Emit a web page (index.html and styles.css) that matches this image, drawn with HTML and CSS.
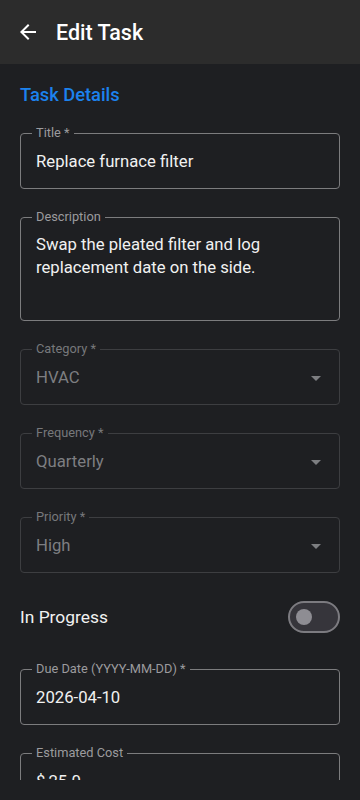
FILE: index.html
```html
<!DOCTYPE html>
<html lang="en">
<head>
<meta charset="utf-8">
<meta name="viewport" content="width=360, initial-scale=1">
<title>Edit Task</title>
<link rel="stylesheet" href="styles.css">
</head>
<body>
<div class="app">
  <header class="appbar">
    <svg class="back" viewBox="0 0 24 24" width="24" height="24"><path d="M20 11H7.83l5.59-5.59L12 4l-8 8 8 8 1.41-1.41L7.83 13H20v-2z" fill="#ffffff"/></svg>
    <h1 class="appbar-title">Edit Task</h1>
  </header>
  <main class="scroll">
    <h2 class="section">Task Details</h2>

    <div class="field">
      <span class="label">Title *</span>
      <div class="value">Replace furnace filter</div>
    </div>

    <div class="field multiline">
      <span class="label">Description</span>
      <div class="value">Swap the pleated filter and log replacement date on the side.</div>
    </div>

    <div class="field disabled">
      <span class="label">Category *</span>
      <div class="value">HVAC</div>
      <span class="caret"></span>
    </div>

    <div class="field disabled">
      <span class="label">Frequency *</span>
      <div class="value">Quarterly</div>
      <span class="caret"></span>
    </div>

    <div class="field disabled">
      <span class="label">Priority *</span>
      <div class="value">High</div>
      <span class="caret"></span>
    </div>

    <div class="toggle-row">
      <span class="toggle-label">In Progress</span>
      <span class="switch"><span class="thumb"></span></span>
    </div>

    <div class="field due">
      <span class="label">Due Date (YYYY-MM-DD) *</span>
      <div class="value">2026-04-10</div>
    </div>

    <div class="field">
      <span class="label">Estimated Cost</span>
      <div class="value"><span class="prefix">$</span>25.0</div>
    </div>
  </main>
</div>
</body>
</html>
```

FILE: styles.css
```css
* { box-sizing: border-box; }
html, body {
  margin: 0;
  padding: 0;
  background: #1e1f22;
}
body {
  font-family: Roboto, "Noto Sans", "Liberation Sans", sans-serif;
  color: #f1f1f1;
  width: 360px;
  height: 800px;
  overflow: hidden;
}
.app {
  display: flex;
  flex-direction: column;
  height: 800px;
}
.appbar {
  height: 64px;
  flex: none;
  background: #2c2c2c;
  display: flex;
  align-items: center;
  padding-left: 16px;
  gap: 16px;
}
.back { display: block; }
.appbar-title {
  margin: 0;
  font-size: 21.5px;
  font-weight: 500;
  color: #ffffff;
}
.scroll {
  height: 716px;
  overflow: hidden;
  padding: 20px 20px 0;
  display: flex;
  flex-direction: column;
}
.section {
  margin: 0 0 27px;
  font-size: 18.3px;
  line-height: 22px;
  font-weight: 500;
  color: #1c82ee;
}
.field {
  position: relative;
  flex: none;
  height: 56px;
  border: 1px solid #7c7c7e;
  border-radius: 4px;
  margin-bottom: 28px;
  display: flex;
  align-items: center;
  padding: 0 15px;
}
.label {
  position: absolute;
  left: 11px;
  top: -8px;
  padding: 0 4px;
  font-size: 12.8px;
  line-height: 14px;
  color: #9b9b9e;
  background: #1e1f22;
}
.value {
  font-size: 16.7px;
  line-height: 23px;
  color: #f1f1f1;
}
.multiline {
  height: 104px;
  align-items: flex-start;
  padding-top: 15px;
}
.disabled { border-color: #3d3e41; }
.disabled .label { color: #77787b; }
.disabled .value { color: #7d7e81; }
.caret {
  position: absolute;
  right: 18px;
  top: 26px;
  width: 0;
  height: 0;
  border-left: 5px solid transparent;
  border-right: 5px solid transparent;
  border-top: 5px solid #7d7e81;
}
.toggle-row {
  flex: none;
  height: 32px;
  margin-bottom: 36px;
  display: flex;
  align-items: center;
  justify-content: space-between;
}
.toggle-label {
  font-size: 17.4px;
  color: #f1f1f1;
}
.switch {
  width: 52px;
  height: 32px;
  border: 2px solid #7c7b80;
  border-radius: 16px;
  background: #36353b;
  display: flex;
  align-items: center;
  padding-left: 6px;
}
.thumb {
  width: 16px;
  height: 16px;
  border-radius: 50%;
  background: #8e8d93;
}
.prefix { margin-right: 3px; }
```
